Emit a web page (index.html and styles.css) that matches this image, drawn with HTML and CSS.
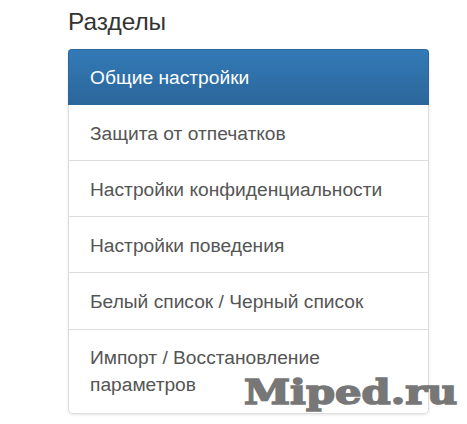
FILE: index.html
```html
<!DOCTYPE html>
<html lang="en">
<head>
<meta charset="UTF-8">
<title>Разделы</title>
<link rel="stylesheet" href="styles.css">
</head>
<body>

<div class="container">
    <h3>Разделы</h3>
    <div class="list-group">
        <a class="list-item active">Общие настройки</a>
        <a class="list-item">Защита от отпечатков</a>
        <a class="list-item">Настройки конфиденциальности</a>
        <a class="list-item">Настройки поведения</a>
        <a class="list-item">Белый список / Черный список</a>
        <a class="list-item">Импорт / Восстановление параметров</a>
    </div>
</div>
<div class="watermark">Miped.ru</div>

</body>
</html>
```

FILE: styles.css
```css
html, body {
    height: 100%;
}

body {
    font-family: "Liberation Sans", Arial, sans-serif;
    margin: 0;
    padding: 0;
    background-color: #fff;
    overflow: hidden;
}

.container {
    width: 361px;
    margin-left: 68px;
}

h3 {
    font-size: 24.4px;
    font-weight: normal;
    line-height: 26px;
    color: #333;
    margin: 0;
    padding: 9px 0 14px;
}

.list-group {
    border-radius: 4px;
    box-shadow: 0 1px 3px rgba(0, 0, 0, 0.1);
}

.list-item {
    display: block;
    box-sizing: border-box;
    padding: 14.4px 21px 13.3px;
    font-size: 19.2px;
    line-height: 27.4px;
    color: #555;
    background-color: #fff;
    border: 1px solid #ddd;
    border-top: none;
}

.list-item:last-child {
    padding-bottom: 14px;
    border-radius: 0 0 5px 5px;
}

.list-item.active {
    padding-bottom: 13.4px;
    color: #fff;
    background-image: linear-gradient(to bottom, #337ab7 0%, #2b669a 100%);
    border: 1px solid #2b669a;
    border-bottom: none;
    border-radius: 4px 4px 0 0;
}

.watermark {
    position: absolute;
    left: 244px;
    top: 372px;
    font-family: "DejaVu Serif", serif;
    font-weight: bold;
    font-size: 34px;
    line-height: 40px;
    color: #777;
    -webkit-text-stroke: 1.6px #777;
    white-space: nowrap;
    transform: scaleX(1.225);
    transform-origin: left center;
}
```
